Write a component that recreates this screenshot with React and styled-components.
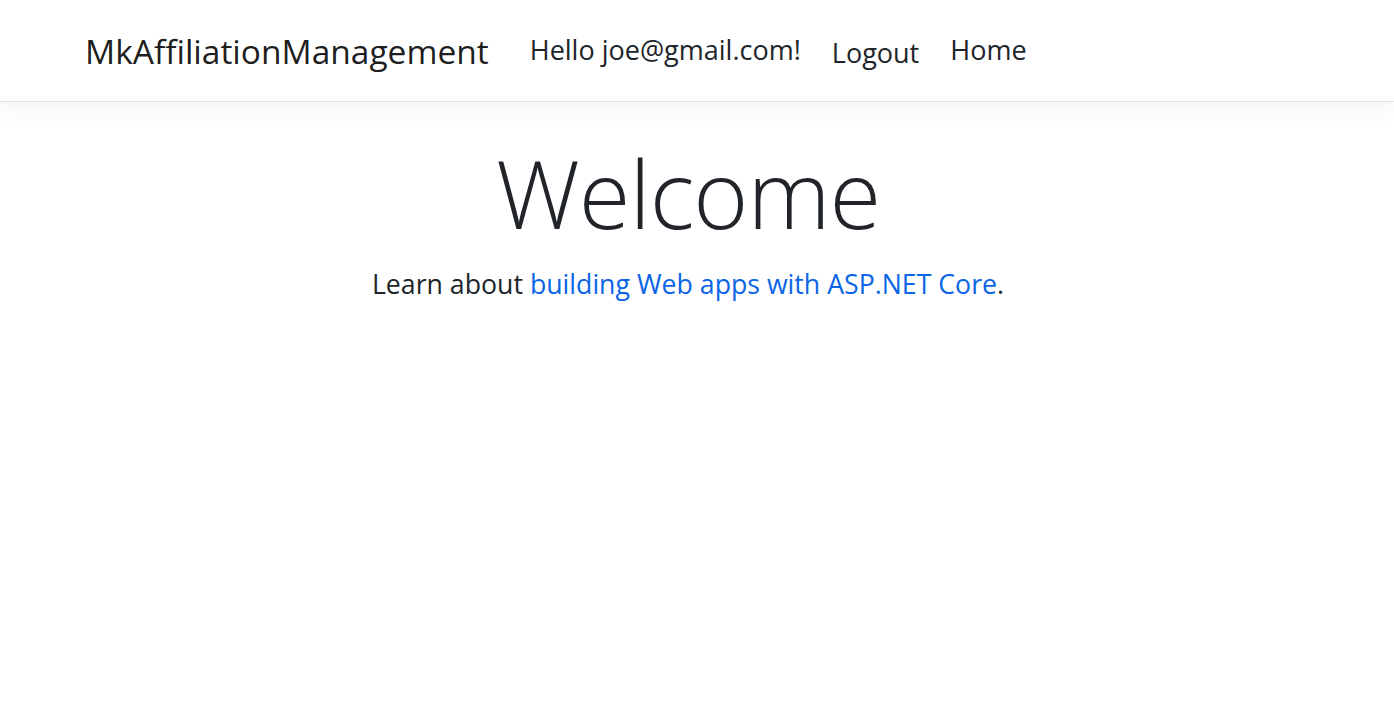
import React from 'react'
import styled, { createGlobalStyle } from 'styled-components'

const GlobalStyle = createGlobalStyle`
    html, body {
        margin: 0;
        padding: 0;
        background: #fff;
    }
    body {
        font-family: "Open Sans", "Noto Sans", sans-serif;
        color: #212529;
    }
`

function App() {
    return (
        <>
            <GlobalStyle />
            <Header>
                <Navbar>
                    <Container>
                        <Brand href="#">MkAffiliationManagement</Brand>
                        <NavList>
                            <NavItem>
                                <NavLink href="#">Hello joe@gmail.com!</NavLink>
                            </NavItem>
                            <NavItem>
                                <LogoutButton type="button">Logout</LogoutButton>
                            </NavItem>
                            <NavItem>
                                <NavLink href="#">Home</NavLink>
                            </NavItem>
                        </NavList>
                    </Container>
                </Navbar>
            </Header>
            <Container>
                <Main>
                    <Title>Welcome</Title>
                    <Lead>
                        Learn about <a href="#">building Web apps with ASP.NET Core</a>.
                    </Lead>
                </Main>
            </Container>
        </>
    )
}

export default App

const Header = styled.header`
    margin-bottom: 35px;
`
const Navbar = styled.nav`
    height: 101px;
    display: flex;
    align-items: center;
    background: #fff;
    border-bottom: 1px solid #dee2e6;
    box-shadow: 0 7px 21px rgba(0, 0, 0, 0.05);
`
const Container = styled.div`
    width: 1206px;
    margin-left: 85px;
    display: flex;
    align-items: center;
`
const Brand = styled.a`
    font-size: 33.5px;
    color: rgba(0, 0, 0, 0.9);
    text-decoration: none;
    margin-right: 27px;
    white-space: nowrap;
`
const NavList = styled.ul`
    list-style: none;
    margin: 0;
    padding: 0;
    display: flex;
    align-items: center;
`
const NavItem = styled.li`
    display: flex;
    align-items: center;
`
const NavLink = styled.a`
    font-size: 27px;
    color: #212529;
    text-decoration: none;
    padding: 0 14px 2px;
    white-space: nowrap;
`
const LogoutButton = styled.button`
    font-family: inherit;
    font-size: 27px;
    color: #212529;
    background: none;
    border: 0;
    padding: 3px 17px 0;
    cursor: pointer;
`
const Main = styled.main`
    flex: 1;
    text-align: center;
`
const Title = styled.h1`
    font-size: 94px;
    font-weight: 300;
    line-height: 1.2;
    margin: 0 0 15px;
    letter-spacing: -1px;
`
const Lead = styled.p`
    font-size: 26.7px;
    margin: 0;

    a {
        color: #0b65e6;
        text-decoration: none;
    }
`
